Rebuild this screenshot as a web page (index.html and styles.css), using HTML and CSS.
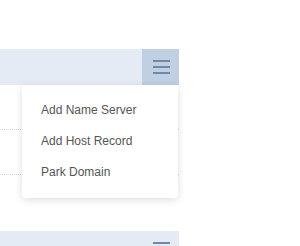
FILE: index.html
```html
<!doctype html>
<html lang="en">
<head>
<meta charset="utf-8">
<meta name="viewport" content="width=device-width, initial-scale=1">
<title>Domains</title>
<link rel="stylesheet" href="styles.css">
</head>
<body>
	<div class="dm-lista">
		<div class="dm-painel">
			<div class="dm-cabecalho">
				<button class="dm-menu dm-menu-ativo" aria-label="menu">
					<svg width="17" height="14" viewBox="0 0 17 14"><path d="M0 1h17M0 7h17M0 13h17" stroke="currentColor" stroke-width="2"/></svg>
				</button>
			</div>
			<div class="dm-corpo">
				<div class="dm-linha"></div>
				<div class="dm-linha"></div>
				<div class="dm-linha dm-ultima"></div>
			</div>
			<ul class="dm-dropdown">
				<li>Add Name Server</li>
				<li>Add Host Record</li>
				<li>Park Domain</li>
			</ul>
		</div>
		<div class="dm-painel">
			<div class="dm-cabecalho">
				<button class="dm-menu" aria-label="menu">
					<svg width="17" height="14" viewBox="0 0 17 14"><path d="M0 1h17M0 7h17M0 13h17" stroke="currentColor" stroke-width="2"/></svg>
				</button>
			</div>
			<div class="dm-corpo">
				<div class="dm-linha"></div>
			</div>
		</div>
	</div>
</body>
</html>
```
FILE: styles.css
```css
*
{
	margin: 0;
	padding: 0;
	box-sizing: border-box;
}
body
{
	font-family: "Liberation Sans", Arial, sans-serif;
	font-size: 12px;
	background-color: #FFF;
}
.dm-lista
{
	padding-top: 49px;
	width: 179px;
}
.dm-painel
{
	position: relative;
	margin-bottom: 11px;
}
.dm-cabecalho
{
	height: 36px;
	background-color: #e4ebf5;
	display: flex;
	justify-content: flex-end;
}
.dm-menu
{
	width: 37px;
	height: 36px;
	border: none;
	background: none;
	color: #6f89a8;
	display: flex;
	align-items: center;
	justify-content: center;
	padding-left: 1px;
}
.dm-menu-ativo
{
	background-color: #c0cfe1;
}
.dm-linha
{
	height: 45px;
	border-bottom: 1px dotted #d6d6d6;
}
.dm-ultima
{
	border-bottom: none;
}
.dm-dropdown
{
	position: absolute;
	top: 36px;
	left: 22px;
	width: 156px;
	list-style: none;
	background-color: #FFF;
	border-radius: 0 0 4px 4px;
	box-shadow: 0 2px 8px rgba(0, 0, 0, 0.13);
	padding: 10px 0;
}
.dm-dropdown li
{
	line-height: 31px;
	padding-left: 19px;
	color: #555;
}
```
